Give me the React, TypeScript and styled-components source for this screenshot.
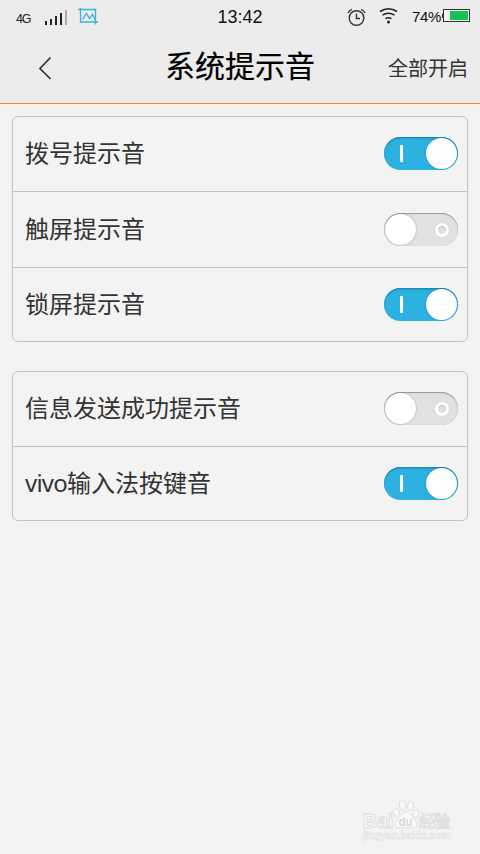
import React from "react";
import styled, { createGlobalStyle } from "styled-components";

const GlobalStyle = createGlobalStyle`
  * { box-sizing: border-box; }
  body { margin: 0; background: #f3f3f3; overflow: hidden; }
`;

const Screen = styled.div`
  position: relative;
  width: 480px;
  height: 854px;
  display: flex;
  flex-direction: column;
  background: #f3f3f3;
  color: #333;
  font-family: "Noto Sans", "Noto Sans CJK SC", sans-serif;
`;

const Top = styled.header`
  height: 104px;
  background: #ececec;
  border-bottom: 1px solid #f08a32;
`;

const StatusBar = styled.div`
  height: 34px;
  display: grid;
  grid-template-columns: 1fr 60px 1fr;
  color: #111;
`;

const StatusLeft = styled.div`
  display: flex;
  align-items: flex-start;
  padding-left: 16px;
`;

const Spacer = styled.span<{ $width: number }>`
  flex: none;
  width: ${(p) => p.$width}px;
`;

const Network = styled.span`
  width: 28px;
  padding-top: 12px;
  font: 12.5px/14px "Liberation Sans", sans-serif;
  letter-spacing: -1.2px;
  color: #222;
`;

const Clock = styled.div`
  text-align: center;
  font: 18px/34px "Liberation Sans", sans-serif;
  white-space: nowrap;
`;

const StatusRight = styled.div`
  display: flex;
  align-items: flex-start;
  justify-content: flex-end;
  padding-right: 10px;
`;

const Percent = styled.span`
  width: 30px;
  margin-left: 14px;
  font: 15px/33px "Liberation Sans", sans-serif;
  letter-spacing: -0.4px;
  white-space: nowrap;
`;

const TitleBar = styled.div`
  height: 69px;
  display: grid;
  grid-template-columns: 130px 1fr 130px;
`;

const Back = styled.button`
  display: flex;
  align-items: flex-start;
  border: 0;
  padding: 22px 0 0 37px;
  background: none;
`;

const Title = styled.h1`
  margin: 0;
  text-align: center;
  font-size: 30px;
  line-height: 64px;
  font-weight: 400;
  color: #000;
  -webkit-text-stroke: 0.2px #000;
`;

const Action = styled.div`
  padding-right: 12px;
  text-align: right;
  font-size: 20px;
  line-height: 69px;
`;

const Groups = styled.main`
  display: flex;
  flex-direction: column;
  gap: 29px;
  padding: 12px;
`;

const Card = styled.section`
  border: 1px solid #c2c2c2;
  border-radius: 6px;
`;

const Row = styled.div<{ $height: number }>`
  display: flex;
  justify-content: space-between;
  align-items: flex-start;
  height: ${(p) => p.$height}px;
  padding: ${(p) => (p.$height > 74 ? 21 : 20)}px 9px 0 12px;
  & + & { border-top: 1px solid #c2c2c2; }
`;

const Label = styled.span`
  font-size: 24px;
  line-height: 32px;
`;

const Latin = styled.span`
  font-family: "Noto Sans", "Open Sans", sans-serif;
  letter-spacing: -0.8px;
`;

const Track = styled.button<{ $on: boolean }>`
  display: flex;
  align-items: center;
  justify-content: space-between;
  flex-direction: ${(p) => (p.$on ? "row" : "row-reverse")};
  width: 74px;
  height: 33px;
  padding: ${(p) => (p.$on ? "0 1px 0 16px" : "0 9px 0 1px")};
  border: 0;
  border-radius: 17px;
  background: ${(p) => (p.$on ? "#2cb1e1" : "#e1e1e1")};
  box-shadow: ${(p) =>
    p.$on
      ? "inset 0 1px 1px #1f85a9, inset 0 2px 2px rgba(20,100,130,.2)"
      : "inset 0 1px 1px #999, inset 0 0 1px #bbb"};
`;

const Thumb = styled.span`
  width: 31px;
  height: 31px;
  border-radius: 50%;
  background: #fff;
  box-shadow: 0 0 2px rgba(0, 0, 0, 0.3);
`;

const OnMark = styled.span`
  width: 3px;
  height: 17px;
  border-radius: 1px;
  background: #fff;
`;

const OffMark = styled.span`
  width: 14px;
  height: 14px;
  border: 3px solid #fff;
  border-radius: 50%;
  background: #e1e1e1;
  box-shadow: inset 0 1px 1px #bbb, 0 0 1px #ccc;
`;

const Watermark = styled.div`
  position: absolute;
  left: 362px;
  top: 798px;
`;

function Toggle({ on }: { on: boolean }) {
  return (
    <Track $on={on} role="switch" aria-checked={on}>
      {on ? <OnMark /> : <OffMark />}
      <Thumb />
    </Track>
  );
}

type Setting = { latin?: string; label: string; on: boolean; height: number };

const groups: Setting[][] = [
  [
    { label: "拨号提示音", on: true, height: 74 },
    { label: "触屏提示音", on: false, height: 76 },
    { label: "锁屏提示音", on: true, height: 74 },
  ],
  [
    { label: "信息发送成功提示音", on: false, height: 74 },
    { latin: "vivo", label: "输入法按键音", on: true, height: 74 },
  ],
];

const SignalIcon = () => (
  <svg width="24" height="34">
    <g fill="#222">
      <rect x="1" y="21" width="2" height="4" />
      <rect x="6" y="19" width="2" height="6" />
      <rect x="11" y="16" width="2" height="9" />
      <rect x="16" y="13" width="2" height="12" />
    </g>
    <rect x="21" y="10" width="2" height="15" fill="#aaa" />
  </svg>
);

const CropIcon = () => (
  <svg width="22" height="34" fill="none" stroke="#35b2df">
    <path d="M0 9.500h17.500V24.500M2.500 8v14h17.500" strokeWidth="1.300" />
    <path d="M4.500 19.500l4-6 3 5 3-4 2.500 5" strokeWidth="1.300" />
  </svg>
);

const AlarmIcon = () => (
  <svg width="20" height="34" fill="none" stroke="#333" strokeWidth="1.400">
    <circle cx="10.500" cy="18" r="7.300" />
    <path d="M10.500 13.500V18.500h3.500M2 13q1-2.500 4-3.700M19 13q-1-2.500-4-3.700" />
  </svg>
);

const WifiIcon = () => (
  <svg width="20" height="34" fill="none" stroke="#222" strokeWidth="1.500">
    <path d="M2 11.500q8.500-5.500 17 0M4.500 15.200q6-4 12 0M7.500 18.700q3-2 6 0" />
    <circle cx="10.500" cy="22" r="1.500" fill="#222" stroke="none" />
  </svg>
);

const BatteryIcon = () => (
  <svg width="28" height="34">
    <path d="M0 13.500h1.500v4.500H0z" fill="#333" />
    <rect x="1.500" y="9.500" width="26" height="12" fill="#f0f0f0" stroke="#333" />
    <rect x="8" y="11" width="18" height="9" fill="#14c354" />
  </svg>
);

const BaiduMark = () => (
  <svg width="96" height="46" fontFamily="Liberation Sans, Noto Sans CJK SC, sans-serif" fill="#f9f9f9" stroke="#dcdcdc" strokeWidth="0.900">
    <text x="0.500" y="29.500" fontSize="20" fontWeight="700" textLength="31" lengthAdjust="spacingAndGlyphs">Bai</text>
    <ellipse cx="34.500" cy="14.500" rx="2.900" ry="4.300" transform="rotate(-15 34.500 14.500)" />
    <ellipse cx="40.500" cy="7" rx="3" ry="4.700" />
    <ellipse cx="48.500" cy="7.700" rx="3" ry="4.500" transform="rotate(10 48.500 7.700)" />
    <ellipse cx="54" cy="15.500" rx="2.800" ry="4.200" transform="rotate(15 54 15.500)" />
    <path d="M44 14c4 0 5 4 8 7 5 5 3 10-2 9-4-.7-8-.7-11 0-6 1-8-4-4-8 4-3.500 5-8 9-8z" />
    <text x="36.500" y="28" fontSize="13" fontWeight="700" fill="#d8d8d8" stroke="none" textLength="14" lengthAdjust="spacingAndGlyphs">du</text>
    <text x="57" y="28.500" fontSize="16" fontWeight="500" textLength="31">经验</text>
    <text x="1" y="41" fontSize="10" fontWeight="700" strokeWidth="0.500" textLength="87" lengthAdjust="spacingAndGlyphs">jingyan.baidu.com</text>
  </svg>
);

export default function App() {
  return (
    <Screen>
      <GlobalStyle />
      <Top>
        <StatusBar>
          <StatusLeft>
            <Network>4G</Network>
            <SignalIcon />
            <Spacer $width={10} />
            <CropIcon />
          </StatusLeft>
          <Clock>13:42</Clock>
          <StatusRight>
            <AlarmIcon />
            <Spacer $width={12} />
            <WifiIcon />
            <Percent>74%</Percent>
            <BatteryIcon />
          </StatusRight>
        </StatusBar>
        <TitleBar>
          <Back aria-label="返回">
            <svg width="16" height="26" fill="none" stroke="#333" strokeWidth="1.700">
              <path d="M13.500 1.500L3 12.500l10.500 10.500" />
            </svg>
          </Back>
          <Title>系统提示音</Title>
          <Action>全部开启</Action>
        </TitleBar>
      </Top>
      <Groups>
        {groups.map((group, i) => (
          <Card key={i}>
            {group.map((s) => (
              <Row key={s.label} $height={s.height}>
                <Label>
                  {s.latin && <Latin>{s.latin}</Latin>}
                  {s.label}
                </Label>
                <Toggle on={s.on} />
              </Row>
            ))}
          </Card>
        ))}
      </Groups>
      <Watermark>
        <BaiduMark />
      </Watermark>
    </Screen>
  );
}
